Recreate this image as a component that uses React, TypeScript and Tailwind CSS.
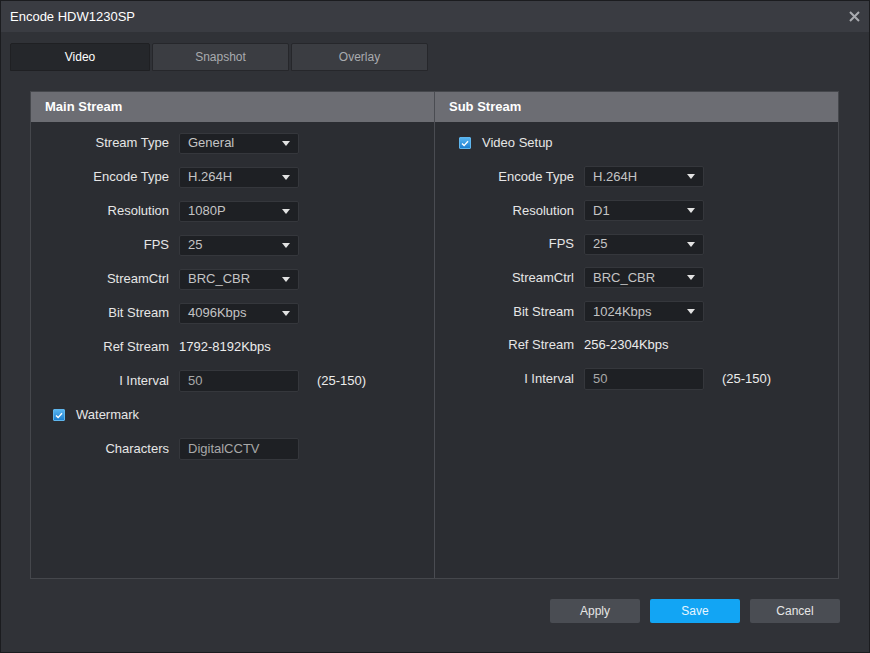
import React from 'react';

// Row types for the stream columns
type Row =
  | { kind: 'select'; label: string; value: string }
  | { kind: 'text'; label: string; value: string }
  | { kind: 'input'; label: string; value: string; hint?: string }
  | { kind: 'check'; label: string };

const mainRows: Row[] = [
  { kind: 'select', label: 'Stream Type', value: 'General' },
  { kind: 'select', label: 'Encode Type', value: 'H.264H' },
  { kind: 'select', label: 'Resolution', value: '1080P' },
  { kind: 'select', label: 'FPS', value: '25' },
  { kind: 'select', label: 'StreamCtrl', value: 'BRC_CBR' },
  { kind: 'select', label: 'Bit Stream', value: '4096Kbps' },
  { kind: 'text', label: 'Ref Stream', value: '1792-8192Kbps' },
  { kind: 'input', label: 'I Interval', value: '50', hint: '(25-150)' },
  { kind: 'check', label: 'Watermark' },
  { kind: 'input', label: 'Characters', value: 'DigitalCCTV' },
];

const subRows: Row[] = [
  { kind: 'check', label: 'Video Setup' },
  { kind: 'select', label: 'Encode Type', value: 'H.264H' },
  { kind: 'select', label: 'Resolution', value: 'D1' },
  { kind: 'select', label: 'FPS', value: '25' },
  { kind: 'select', label: 'StreamCtrl', value: 'BRC_CBR' },
  { kind: 'select', label: 'Bit Stream', value: '1024Kbps' },
  { kind: 'text', label: 'Ref Stream', value: '256-2304Kbps' },
  { kind: 'input', label: 'I Interval', value: '50', hint: '(25-150)' },
];

function Checkbox() {
  return (
    <span className="flex h-[12px] w-[12px] items-center justify-center rounded-[1px] border border-[#5fb6ee] bg-gradient-to-b from-[#56b4f0] to-[#1a7fd0]">
      <svg width="8" height="7" viewBox="0 0 8 7">
        <path d="M1 3.6 L3.1 5.6 L7 1.3" fill="none" stroke="#ffffff" strokeWidth="1.4" />
      </svg>
    </span>
  );
}

function Field({ row, checkOffset, labelW }: { row: Row; checkOffset: string; labelW: string }) {
  if (row.kind === 'check') {
    return (
      <div className={`flex h-[20px] items-center gap-[11px] ${checkOffset}`}>
        <Checkbox />
        <span className="text-[13px] text-[#e6e6e6]">{row.label}</span>
      </div>
    );
  }
  return (
    <div className="flex h-[20px] items-center">
      <span className={`${labelW} pr-[10px] text-right text-[13px] text-[#e6e6e6]`}>{row.label}</span>
      {row.kind === 'select' && (
        <div className="flex h-[21px] w-[120px] items-center justify-between rounded-[2px] border border-[#35373c] bg-[#1e2024] pl-[8px] pr-[8px]">
          <span className="text-[13px] text-[#c4c4c4]">{row.value}</span>
          <svg width="8" height="5" viewBox="0 0 8 5">
            <path d="M0 0 H8 L4 5 Z" fill="#e2e2e2" />
          </svg>
        </div>
      )}
      {row.kind === 'text' && <span className="text-[13px] text-[#ececec]">{row.value}</span>}
      {row.kind === 'input' && (
        <>
          <div className="flex h-[22px] w-[120px] items-center rounded-[2px] border border-[#35373c] bg-[#1e2024] pl-[8px]">
            <span className="text-[13px] text-[#a8a8a8]">{row.value}</span>
          </div>
          {row.hint && <span className="ml-[18px] text-[13px] text-[#ececec]">{row.hint}</span>}
        </>
      )}
    </div>
  );
}

function StreamColumn({
  title,
  rows,
  checkOffset,
  gap,
  labelW,
  border,
}: {
  title: string;
  rows: Row[];
  checkOffset: string;
  gap: string;
  labelW: string;
  border?: boolean;
}) {
  return (
    <div className={`flex flex-col ${border ? 'w-[404px] border-r border-[#4a4c52]' : 'flex-1'}`}>
      <div className="flex h-[30px] items-center bg-[#6c6d73] pl-[14px] text-[13px] font-bold text-white">{title}</div>
      <div className={`flex flex-col pt-[11px] ${gap}`}>
        {rows.map((r, i) => (
          <Field key={i} row={r} checkOffset={checkOffset} labelW={labelW} />
        ))}
      </div>
    </div>
  );
}

export default function App() {
  const tabs = ['Video', 'Snapshot', 'Overlay'];

  return (
    <div
      className="flex h-[653px] w-[870px] flex-col border border-[#1b1c1f] bg-[#303237]"
      style={{ fontFamily: '"Liberation Sans", Arial, sans-serif' }}
    >
      {/* Title bar */}
      <div className="flex h-[31px] shrink-0 items-center justify-between bg-[#3a3c42] pl-[9px] pr-[9px]">
        <span className="text-[13px] text-white">Encode HDW1230SP</span>
        <svg width="11" height="11" viewBox="0 0 11 11">
          <path d="M1 1 L10 10 M10 1 L1 10" stroke="#a9abb0" strokeWidth="2" />
        </svg>
      </div>

      {/* Tabs */}
      <div className="ml-[9px] mt-[11px] flex gap-[2px]">
        {tabs.map((t, i) => (
          <div
            key={t}
            className={`flex h-[28px] items-center justify-center rounded-t-[2px] border text-[12px] ${
              i === 0
                ? 'w-[140px] border-[#1f2023] bg-[#25272b] text-white'
                : 'w-[137px] border-[#26272b] bg-[#3b3d42] text-[#a9abaf]'
            }`}
          >
            {t}
          </div>
        ))}
      </div>

      {/* Streams panel */}
      <div className="ml-[29px] mt-[20px] flex h-[488px] w-[809px] border border-[#45474c] bg-[#2b2d32]">
        <StreamColumn title="Main Stream" rows={mainRows} checkOffset="pl-[22px]" gap="gap-[14px]" labelW="w-[148px]" border />
        <StreamColumn title="Sub Stream" rows={subRows} checkOffset="pl-[24px]" gap="gap-[13.7px]" labelW="w-[149px]" />
      </div>

      {/* Footer buttons */}
      <div className="mr-[29px] mt-[20px] flex justify-end gap-[10px]">
        <button className="h-[24px] w-[90px] rounded-[2px] bg-[#4a4d53] text-[12px] text-[#e6e6e6]">Apply</button>
        <button className="h-[24px] w-[90px] rounded-[2px] bg-[#12a5f4] text-[12px] text-[#e8f6ff]">Save</button>
        <button className="h-[24px] w-[90px] rounded-[2px] bg-[#4a4d53] text-[12px] text-[#e6e6e6]">Cancel</button>
      </div>
    </div>
  );
}
